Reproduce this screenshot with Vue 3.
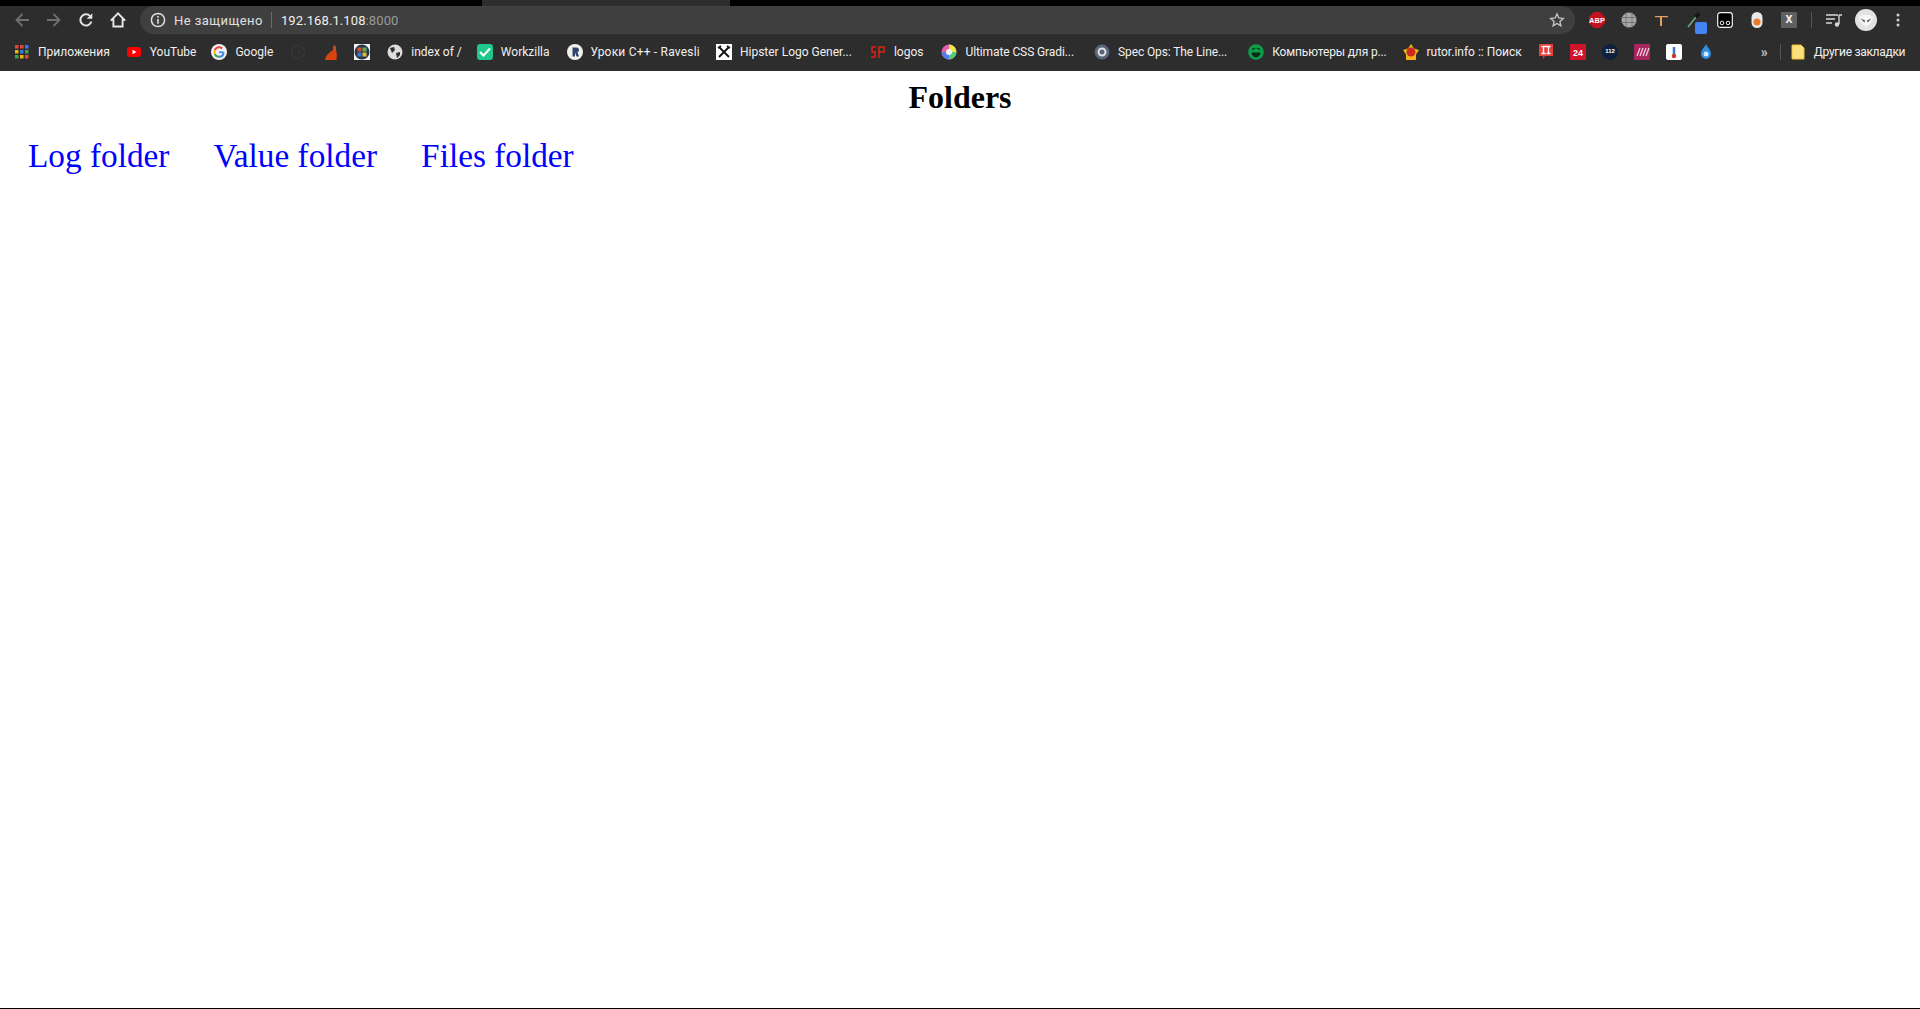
<script setup>
const bookmarks = [
  { label: "Приложения", icon: "apps", gap: 16 },
  { label: "YouTube", icon: "yt", gap: 15 },
  { label: "Google", icon: "google", gap: 17 },
  { label: "", icon: "dial", gap: 17 },
  { label: "", icon: "cat", gap: 15 },
  { label: "", icon: "win", gap: 17 },
  { label: "index of /", icon: "globe", gap: 15 },
  { label: "Workzilla", icon: "check", gap: 17 },
  { label: "Уроки C++ - Ravesli", icon: "ravesli", gap: 16, spacing: 0.2 },
  { label: "Hipster Logo Gener...", icon: "hipster", gap: 18 },
  { label: "logos", icon: "sp", gap: 18 },
  { label: "Ultimate CSS Gradi...", icon: "gradient", gap: 20, spacing: -0.1 },
  { label: "Spec Ops: The Line...", icon: "gear", gap: 21, spacing: -0.1 },
  { label: "Компьютеры для р...", icon: "smile", gap: 16, spacing: -0.15 },
  { label: "rutor.info :: Поиск", icon: "star", gap: 16 },
];

const shortcuts = ["pi", "n24", "n112", "lines", "temp", "drop"];
const folders = ["Log folder", "Value folder", "Files folder"];
</script>

<template>
  <div class="page">
    <div class="tabstrip">
      <div class="tab"></div>
    </div>

    <div class="toolbar">
      <svg class="nav-icon" viewBox="0 0 16 16"><path d="M15 8H2.500M8.500 2 2.500 8l6 6" fill="none" stroke="#707070" stroke-width="1.800" /></svg>
      <svg class="nav-icon" viewBox="0 0 16 16"><path d="M1 8h12.500M7.500 2l6 6-6 6" fill="none" stroke="#707070" stroke-width="1.800" /></svg>
      <svg class="nav-icon" viewBox="0 0 16 16"><path d="M13.400 9.500a5.600 5.600 0 1 1-1.300-5.400" fill="none" stroke="#e4e4e4" stroke-width="2" /><path d="M14.300 1.200v5.600H8.700z" fill="#e4e4e4" /></svg>
      <svg class="nav-icon" viewBox="0 0 16 16"><path d="M.8 8.600 8 1.400l7.200 7.200M3.400 6.800V14.500h9.200V6.800" fill="none" stroke="#e8e8e8" stroke-width="1.900" /></svg>

      <div class="omnibox">
        <svg class="info" viewBox="0 0 16 16"><circle cx="8" cy="8" r="6.600" fill="none" stroke="#e0e0e0" stroke-width="1.500" /><path d="M7.200 7h1.600v4.800H7.200zM7.200 4h1.600v1.700H7.200z" fill="#e0e0e0" /></svg>
        <span class="secure">Не защищено</span>
        <span class="divider"></span>
        <span class="url">192.168.1.108<span class="port">:8000</span></span>
        <svg class="bookmark-star" viewBox="0 0 16 16"><path d="m8 1.800 1.800 4.200 4.500.4-3.400 3 1 4.400L8 11.500l-3.900 2.300 1-4.400-3.400-3 4.500-.4z" fill="none" stroke="#c8c8c8" stroke-width="1.300" /></svg>
      </div>

      <div class="extensions">
        <svg class="ext" viewBox="0 0 16 16"><path d="M5 0h6l5 5v6l-5 5H5l-5-5V5z" fill="#c4121a" /><text x="8" y="10.800" text-anchor="middle" class="abp">ABP</text></svg>
        <svg class="ext" viewBox="0 0 16 16"><circle cx="8" cy="8" r="7.500" fill="#a8a8a8" /><path d="M0 5.500h16M0 10.500h16M5 .5v15M11 .5v15" stroke="#6a6a6a" stroke-width=".8" /></svg>
        <svg class="ext" viewBox="0 0 16 16"><path d="M2 4h13v1.300H9V14H7V5.300H2z" fill="#e0a060" /></svg>
        <span class="ext picker">
          <svg viewBox="0 0 16 16" class="fill"><path d="m3 15 8-10" stroke="#6aa87a" stroke-width="1.600" /><path d="m9 3.500 3.500-3.500 3 3-3.500 3.500z" fill="#161616" /></svg>
          <span class="picker-swatch"></span>
        </span>
        <svg class="ext" viewBox="0 0 16 16"><rect x=".7" y=".7" width="14.600" height="14.600" rx="2.500" fill="#000" stroke="#f2f2f2" stroke-width="1.200" /><circle cx="5" cy="11" r="1.800" fill="none" stroke="#f2f2f2" /><circle cx="11" cy="11" r="1.800" fill="none" stroke="#f2f2f2" /></svg>
        <svg class="ext" viewBox="0 0 16 16"><rect x="2.500" y="0" width="11" height="16" rx="5.500" fill="#e8e8e8" /><circle cx="8" cy="10" r="3.500" fill="#e8792b" /></svg>
        <span class="ext x-badge">X</span>
      </div>

      <span class="tool-divider"></span>
      <svg class="queue" viewBox="0 0 16 16"><path d="M0 3h12M0 7h9M0 11h6" stroke="#d8d8d8" stroke-width="1.300" /><path d="M13 3h3M13 3v9" stroke="#d8d8d8" stroke-width="1.400" /><circle cx="11" cy="12.500" r="2.200" fill="#d8d8d8" /></svg>
      <svg class="avatar" viewBox="0 0 22 22"><circle cx="11" cy="11" r="11" fill="#e2e2e2" /><path d="M4 8c2-3 12-3 14 0 0 4-4 9-7 9S4 12 4 8z" fill="#f6f6f6" /><path d="M5.500 9.500l4.500 2-.5 2zM16.500 9.500l-4.500 2 .5 2z" fill="#444" /></svg>
      <svg class="menu" viewBox="0 0 4 16"><circle cx="2" cy="3" r="1.500" fill="#d0d0d0" /><circle cx="2" cy="8" r="1.500" fill="#d0d0d0" /><circle cx="2" cy="13" r="1.500" fill="#d0d0d0" /></svg>
    </div>

    <div class="bookmarks">
      <div v-for="(b, i) in bookmarks" :key="i" class="bm" :style="{ marginRight: b.gap + 'px' }">
        <svg class="fav" viewBox="0 0 16 16">
          <template v-if="b.icon === 'apps'">
            <rect x="1" y="1" width="3.500" height="3.500" fill="#e04a3a" /><rect x="6" y="1" width="3.500" height="3.500" fill="#e04a3a" /><rect x="11" y="1" width="3.500" height="3.500" fill="#3b78e7" />
            <rect x="1" y="6" width="3.500" height="3.500" fill="#f0b400" /><rect x="6" y="6" width="3.500" height="3.500" fill="#3b78e7" /><rect x="11" y="6" width="3.500" height="3.500" fill="#34a853" />
            <rect x="1" y="11" width="3.500" height="3.500" fill="#34a853" /><rect x="6" y="11" width="3.500" height="3.500" fill="#f0b400" /><rect x="11" y="11" width="3.500" height="3.500" fill="#e04a3a" />
          </template>
          <template v-else-if="b.icon === 'yt'">
            <rect x="1" y="3" width="14" height="10" rx="3" fill="#f00" /><path d="M6.500 5.800v4.400L10.500 8z" fill="#fff" />
          </template>
          <template v-else-if="b.icon === 'google'">
            <circle cx="8" cy="8" r="8" fill="#f1f1f1" />
            <path d="M12.500 8.300c0 2.700-1.900 4.500-4.500 4.500" fill="none" stroke="#4285f4" stroke-width="2" />
            <path d="M8 12.800c-1.900 0-3.500-1.200-4.200-2.900" fill="none" stroke="#34a853" stroke-width="2" />
            <path d="M3.800 9.900c-.4-1.200-.4-2.500 0-3.700" fill="none" stroke="#fbbc05" stroke-width="2" />
            <path d="M3.800 6.200C4.500 4.500 6.100 3.300 8 3.300c1.200 0 2.300.4 3.100 1.200" fill="none" stroke="#ea4335" stroke-width="2" />
            <path d="M8 7.400h4.500v1.700H8z" fill="#4285f4" />
          </template>
          <template v-else-if="b.icon === 'dial'">
            <circle cx="8" cy="8" r="6.500" fill="none" stroke="#383838" stroke-width="1.200" /><path d="m8 9 3-4" stroke="#383838" stroke-width="1.200" />
          </template>
          <template v-else-if="b.icon === 'cat'">
            <path d="M2 16c0-3 2-5 4-7 1-1 3-2 4-3V1l1.500 1.500L13 1v5c1 3 1 7 .5 10z" fill="#d8430f" />
          </template>
          <template v-else-if="b.icon === 'win'">
            <rect width="16" height="16" fill="#f2f2f2" /><circle cx="8" cy="8" r="7.500" fill="#26384e" />
            <rect x="3.500" y="3.500" width="4" height="4" fill="#d9502e" /><rect x="8.500" y="3.500" width="4" height="4" fill="#6aa84f" />
            <rect x="3.500" y="8.500" width="4" height="4" fill="#3b78c7" /><rect x="8.500" y="8.500" width="4" height="4" fill="#e8b830" />
          </template>
          <template v-else-if="b.icon === 'globe'">
            <circle cx="8" cy="8" r="7.500" fill="#dcdcdc" /><path d="M3 4l4-1 1 3-3 3zM9 9l4-1 0 3-3 3z" fill="#2d2d2d" />
          </template>
          <template v-else-if="b.icon === 'check'">
            <rect width="16" height="16" rx="3" fill="#1ec98b" /><path d="m3 8 3.500 3.500L13 4.500" fill="none" stroke="#fff" stroke-width="2.200" />
          </template>
          <template v-else-if="b.icon === 'ravesli'">
            <circle cx="8" cy="8" r="8" fill="#f0f0f0" /><path d="M5.500 3.500h4a2.500 2.500 0 0 1 1 4.800l1.500 4.200H9.500L8 8.500v4H5.500z" fill="#2f4468" />
          </template>
          <template v-else-if="b.icon === 'hipster'">
            <rect width="16" height="16" fill="#fff" /><path d="m3 3 10 10M13 3 3 13" stroke="#111" stroke-width="1.800" /><path d="M2 4l3-2M14 4l-3-2" stroke="#111" stroke-width="1.800" />
          </template>
          <template v-else-if="b.icon === 'sp'">
            <path d="M6 3H2v5h3v5H1M9 14V3h5v5H9" fill="none" stroke="#e0230f" stroke-width="1.500" />
          </template>
          <template v-else-if="b.icon === 'gradient'">
            <circle cx="8" cy="8" r="7.500" fill="#e85ca8" /><path d="M8 8V.5a7.500 7.500 0 0 1 7.500 7.500z" fill="#f2e54a" /><path d="M8 8h7.500A7.500 7.500 0 0 1 8 15.500z" fill="#4fd07a" /><path d="M8 8v7.500A7.500 7.500 0 0 1 .5 8z" fill="#5a7de8" /><circle cx="8" cy="8" r="3" fill="#f4f4f4" />
          </template>
          <template v-else-if="b.icon === 'gear'">
            <circle cx="8" cy="8" r="7.500" fill="#5a6478" /><circle cx="8" cy="8" r="3.500" fill="none" stroke="#e4e4e4" stroke-width="2" />
          </template>
          <template v-else-if="b.icon === 'smile'">
            <circle cx="8" cy="8" r="7.800" fill="#0f9d4a" /><path d="M3.500 8.500h9c0 3-2 4.800-4.500 4.800S3.500 11.500 3.500 8.500z" fill="#0a2a14" /><path d="M4 5.500 7 4M9 4l3 1.500" stroke="#0a2a14" stroke-width="1.200" />
          </template>
          <template v-else>
            <path d="M8 0l3 4.500 5 1.500-3 4.500V16H3v-5.500L0 6l5-1.500z" fill="#f2b418" /><circle cx="8" cy="8" r="4.500" fill="#cc2a1c" />
          </template>
        </svg>
        <span v-if="b.label" class="bm-label" :style="{ letterSpacing: (b.spacing || 0) + 'px' }">{{ b.label }}</span>
      </div>

      <div class="shortcuts">
        <svg v-for="s in shortcuts" :key="s" class="fav" viewBox="0 0 16 16">
          <template v-if="s === 'pi'">
            <path d="M1 0h14v12H7l-2 3v-3H1z" fill="#e8413c" /><path d="M3.500 2.500h9M5.500 3v6.500M10.500 3v6.500M3.500 9.500h4M8.500 9.500h4" stroke="#fff" stroke-width="1.300" />
          </template>
          <template v-else-if="s === 'n24'">
            <rect width="16" height="16" rx="1" fill="#d0142c" /><text x="8" y="11.800" text-anchor="middle" class="fav-bold">24</text>
          </template>
          <template v-else-if="s === 'n112'">
            <circle cx="8" cy="8" r="8" fill="#10213f" /><text x="8" y="8.500" text-anchor="middle" class="fav-small">112</text>
          </template>
          <template v-else-if="s === 'lines'">
            <rect width="16" height="16" fill="#a9245f" /><path d="M3 12 6 4M6 12 9 4M9 12l3-8M12 12l3-8" stroke="#f4d8e4" stroke-width="1.200" />
          </template>
          <template v-else-if="s === 'temp'">
            <rect width="16" height="16" rx="2" fill="#fff" /><path d="M8 3v8" stroke="#3476d8" stroke-width="2.500" /><circle cx="8" cy="12" r="2.200" fill="#d9302a" />
          </template>
          <template v-else>
            <path d="M8 0c2 4 5 6 5 10a5 5 0 0 1-10 0c0-4 3-6 5-10z" fill="#2f8fe0" /><circle cx="8" cy="10" r="2.500" fill="#d8ecfa" />
          </template>
        </svg>
      </div>

      <span class="chevrons">»</span>
      <span class="bm-divider"></span>
      <div class="bm other">
        <svg class="fav" viewBox="0 0 16 16"><path d="M2 1h9l3 3v11H2z" fill="#fbe07c" stroke="#f0c03c" /></svg>
        <span class="bm-label other-label">Другие закладки</span>
      </div>
    </div>

    <main class="content">
      <h1 class="title">Folders</h1>
      <nav class="links">
        <a v-for="f in folders" :key="f" href="#" class="folder-link">{{ f }}</a>
      </nav>
    </main>
    <div class="bottom-line"></div>
  </div>
</template>

<style scoped>
.page {
  height: 1009px;
  display: flex;
  flex-direction: column;
  background: #fff;
  overflow: hidden;
}

.tabstrip {
  height: 6px;
  background: #000;
  flex: none;
  padding-left: 482px;
  box-sizing: border-box;
}

.tab {
  width: 248px;
  height: 6px;
  background: #2d2d2d;
}

.toolbar {
  height: 28px;
  flex: none;
  background: #2d2d2d;
  display: flex;
  align-items: center;
  padding-left: 14px;
  font-family: "Roboto", "Liberation Sans", sans-serif;
}

.nav-icon {
  width: 16px;
  height: 16px;
  margin-right: 16px;
  flex: none;
}

.omnibox {
  width: 1435px;
  height: 28px;
  margin-left: -2px;
  flex: none;
  background: #3f3f3f;
  border-radius: 14px;
  display: flex;
  align-items: center;
  box-sizing: border-box;
  padding: 0 10px 0 10px;
  font-size: 13px;
  letter-spacing: 0.1px;
}

.info {
  width: 16px;
  height: 16px;
  flex: none;
}

.secure {
  margin-left: 8px;
  color: #e0e0e0;
  letter-spacing: 0.45px;
}

.divider {
  width: 1px;
  height: 16px;
  background: #6b6b6b;
  margin: 0 9px 0 8px;
}

.url {
  color: #f0f0f0;
}

.port {
  color: #9a9a9a;
}

.bookmark-star {
  width: 16px;
  height: 16px;
  margin-left: auto;
}

.extensions {
  display: flex;
  align-items: center;
  gap: 16px;
  margin-left: 14px;
}

.ext {
  width: 16px;
  height: 16px;
  flex: none;
  display: block;
}

.abp {
  font-size: 7.500px;
  font-weight: 700;
  fill: #fff;
  font-family: "Liberation Sans", sans-serif;
}

.picker {
  position: relative;
}

.fill {
  width: 16px;
  height: 16px;
  display: block;
}

.picker-swatch {
  position: absolute;
  right: -6px;
  bottom: -6px;
  width: 12px;
  height: 12px;
  border-radius: 2px;
  background: #4285f4;
}

.x-badge {
  background: #5f5f5f;
  color: #eee;
  font-size: 11px;
  font-weight: 700;
  text-align: center;
  line-height: 16px;
  border-radius: 1px;
}

.tool-divider {
  width: 1px;
  height: 16px;
  background: #555;
  margin: 0 14px;
}

.queue {
  width: 16px;
  height: 16px;
  flex: none;
}

.avatar {
  width: 22px;
  height: 22px;
  margin-left: 13px;
  flex: none;
}

.menu {
  width: 4px;
  height: 16px;
  margin-left: 19px;
  flex: none;
}

.bookmarks {
  height: 37px;
  flex: none;
  background: #2d2d2d;
  display: flex;
  align-items: center;
  box-sizing: border-box;
  padding-left: 14px;
  padding-bottom: 2px;
  font-family: "Roboto", "Liberation Sans", sans-serif;
  font-size: 12px;
  color: #f0f0f0;
  white-space: nowrap;
}

.bm {
  display: flex;
  align-items: center;
  gap: 8px;
  flex: none;
}

.fav {
  width: 16px;
  height: 16px;
  flex: none;
  display: block;
}

.fav-bold {
  font-size: 9px;
  font-weight: 700;
  fill: #fff;
  font-family: "Liberation Sans", sans-serif;
}

.fav-small {
  font-size: 6px;
  font-weight: 700;
  fill: #fff;
  font-family: "Liberation Sans", sans-serif;
}

.shortcuts {
  display: flex;
  gap: 16px;
}

.chevrons {
  margin-left: 47px;
  color: #c4c4c4;
  font-size: 14px;
  font-weight: 700;
}

.bm-divider {
  width: 1px;
  height: 16px;
  background: #555;
  margin: 0 9px 0 12px;
}

.other-label {
  letter-spacing: -0.3px;
}

.content {
  flex: 1;
  font-family: "Liberation Serif", "Times New Roman", serif;
  padding: 0 28px;
}

.title {
  margin: 8px 0 0;
  text-align: center;
  font-size: 32px;
  font-weight: 700;
  line-height: 37px;
  color: #000;
}

.links {
  display: flex;
  gap: 44px;
  margin-top: 20px;
}

.folder-link {
  color: #0000ff;
  font-size: 33.300px;
  line-height: 39px;
  text-decoration: none;
}

.bottom-line {
  height: 1px;
  flex: none;
  background: #000;
}
</style>
